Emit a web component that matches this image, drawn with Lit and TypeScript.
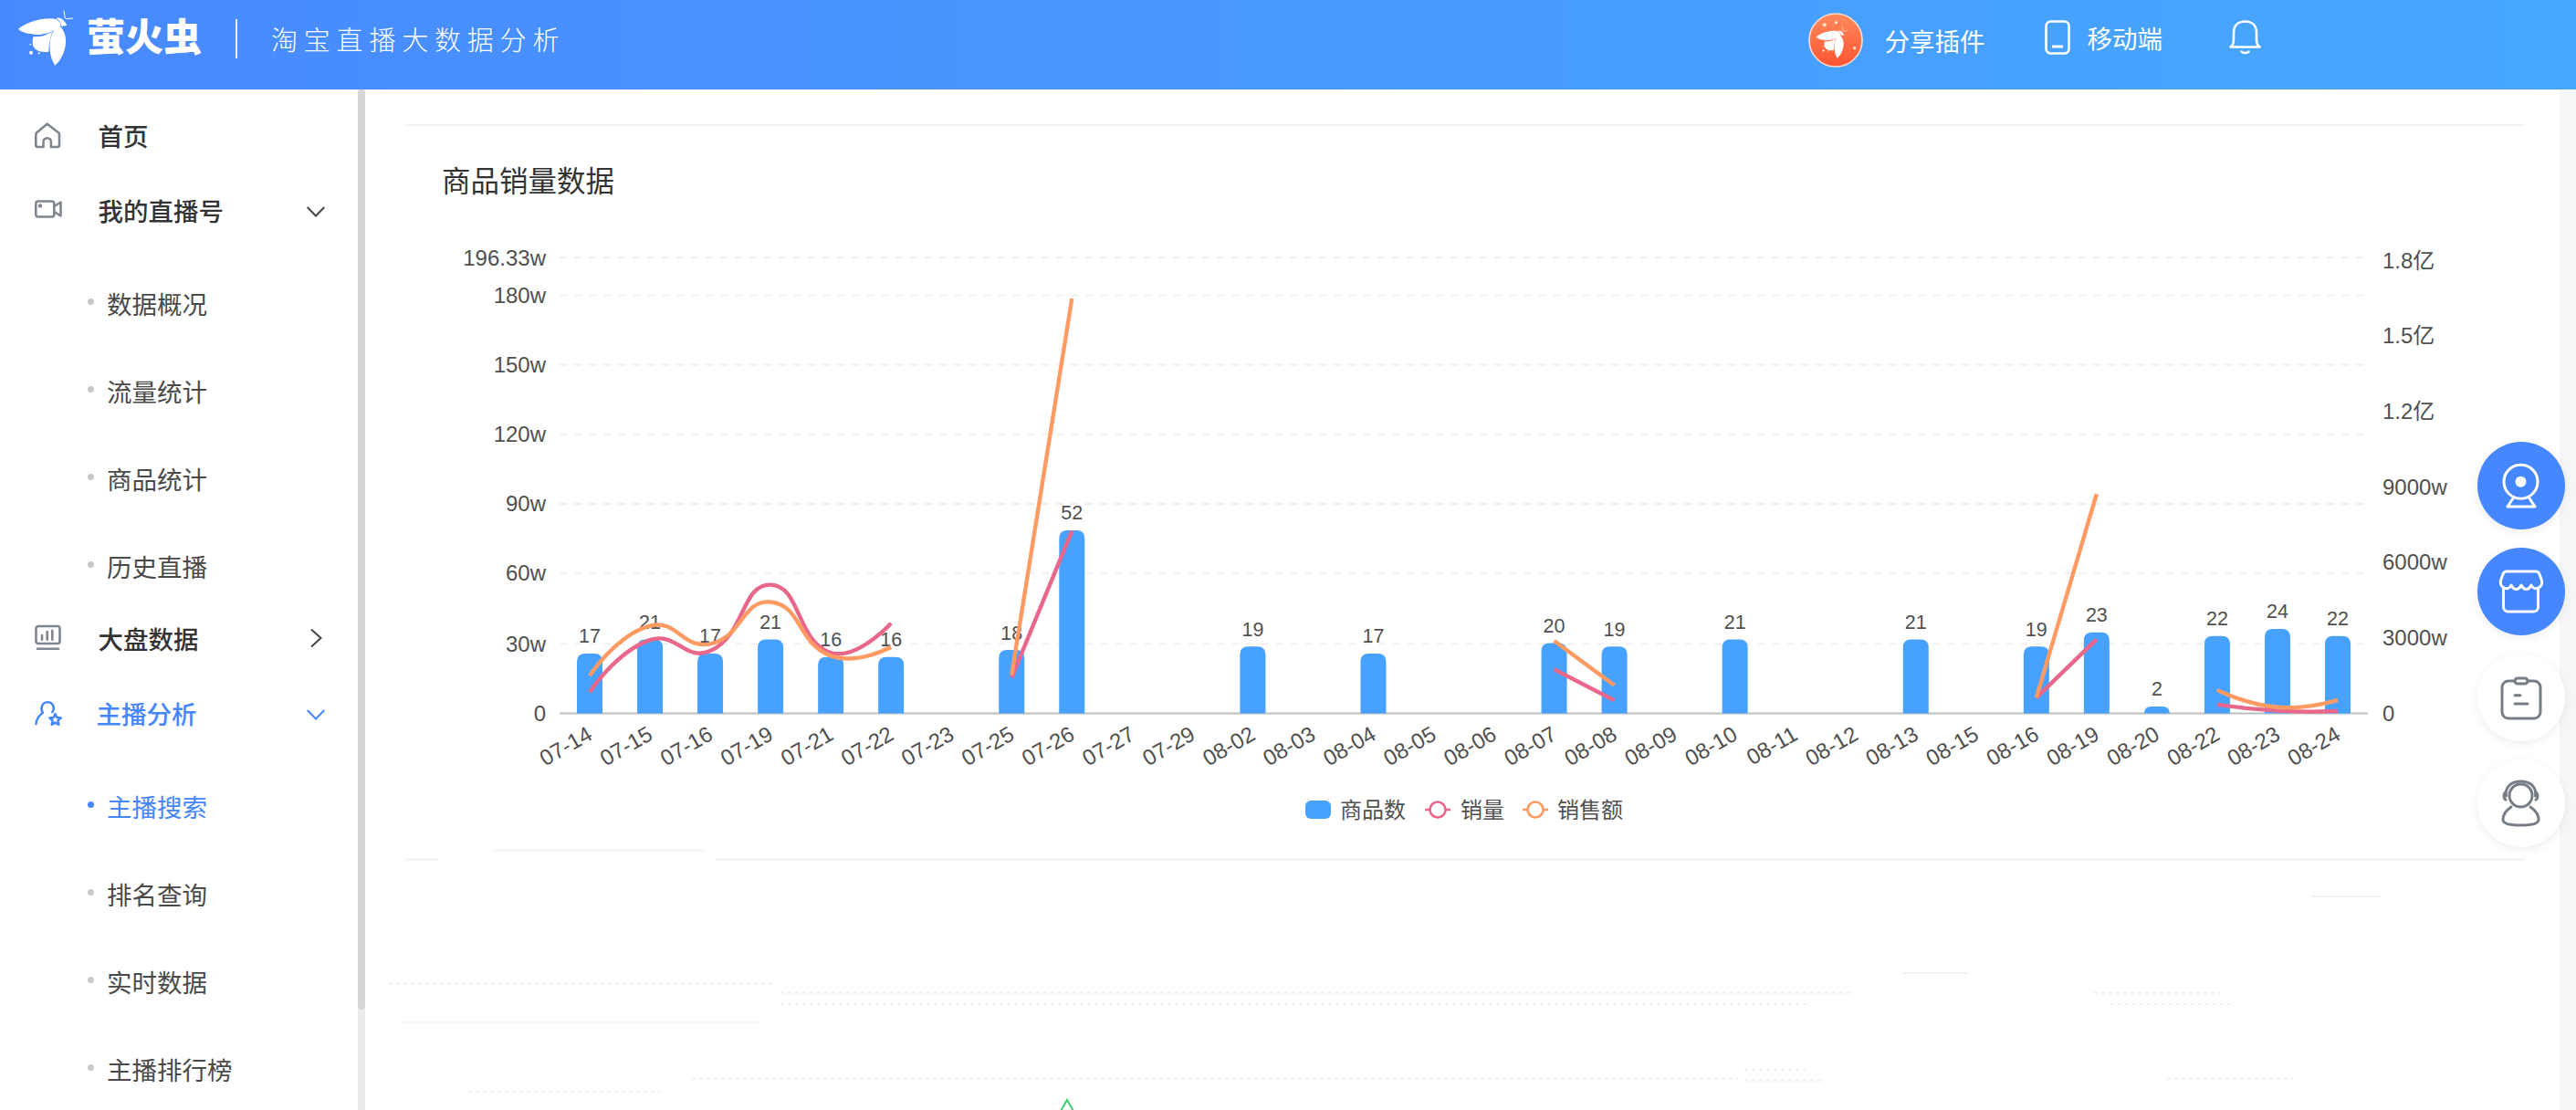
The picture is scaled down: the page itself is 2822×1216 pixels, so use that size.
import { LitElement, html, css, svg } from "lit";
import { customElement } from "lit/decorators.js";

const SANS = `"Liberation Sans", "Noto Sans CJK SC", sans-serif`;

type P = [number, number];

const DATES = ["07-14","07-15","07-16","07-19","07-21","07-22","07-23","07-25","07-26","07-27","07-29","08-02","08-03","08-04","08-05","08-06","08-07","08-08","08-09","08-10","08-11","08-12","08-13","08-15","08-16","08-19","08-20","08-22","08-23","08-24"];
const COUNTS: (number | null)[] = [17,21,17,21,16,16,null,18,52,null,null,19,null,17,null,null,20,19,null,21,null,null,21,null,19,23,2,22,24,22];

const X0 = 613, X1 = 2594, BASE = 781.6;
const STEP = (X1 - X0) / DATES.length;
const cx = (i: number) => X0 + STEP * (i + 0.5);

const GRID = [282, 323.6, 399.8, 475.8, 551.9, 627.7, 705.4];
const LEFT: [string, number][] = [["196.33w",282],["180w",323.6],["150w",399.8],["120w",475.8],["90w",551.9],["60w",627.7],["30w",705.4],["0",781.6]];
const RIGHT: [string, number][] = [["1.8亿",285],["1.5亿",367.8],["1.2亿",450.6],["9000w",533.2],["6000w",615.4],["3000w",698.2],["0",781.6]];

const seg = (start: number, ys: number[]): P[] => ys.map((y, k) => [cx(start + k), y]);
const PINK: P[][] = [
  seg(0, [758.4, 701.2, 713, 640.6, 715, 682.7]),
  seg(7, [742.4, 581.6]),
  seg(16, [733.3, 767.3]),
  seg(24, [764.3, 700.3]),
  seg(27, [771.9, 778.6, 779]),
];
const ORANGE: P[][] = [
  seg(0, [740.3, 685.6, 705.4, 659.5, 718.4, 708.8]),
  seg(7, [739.5, 327]),
  seg(16, [702, 750.7]),
  seg(24, [764.3, 541.2]),
  seg(27, [755.9, 774.8, 766.8]),
];

function smoothPath(pts: P[]): string {
  const s = 0.5;
  const ctrl = pts.map((p, i) => {
    const prev = pts[i - 1], next = pts[i + 1];
    if (!prev || !next) return { a: p, b: p };
    const d0 = Math.hypot(p[0] - prev[0], p[1] - prev[1]);
    const d1 = Math.hypot(next[0] - p[0], next[1] - p[1]);
    const vx = (next[0] - prev[0]) * s, vy = (next[1] - prev[1]) * s;
    const r = d0 / (d0 + d1);
    return {
      a: [p[0] - vx * r, p[1] - vy * r] as P,
      b: [p[0] + vx * (1 - r), p[1] + vy * (1 - r)] as P,
    };
  });
  let d = `M${pts[0][0]} ${pts[0][1]}`;
  for (let i = 1; i < pts.length; i++) {
    const c1 = ctrl[i - 1].b, c2 = ctrl[i].a, p = pts[i];
    d += ` C${c1[0]} ${c1[1]} ${c2[0]} ${c2[1]} ${p[0]} ${p[1]}`;
  }
  return d;
}

function barPath(x: number, top: number, w: number, r: number): string {
  const rr = Math.min(r, BASE - top);
  return `M${x} ${BASE} V${top + rr} Q${x} ${top} ${x + rr} ${top} H${x + w - rr} Q${x + w} ${top} ${x + w} ${top + rr} V${BASE} Z`;
}

const moth = svg`
  <path d="M30 80C60 55 120 40 155 48C165 55 170 62 170 68C150 90 100 105 75 97C55 95 40 90 30 80Z"/>
  <path d="M80 105C105 108 125 100 142 88C135 110 130 135 130 155C105 160 80 150 77 130C76 120 78 110 80 105Z"/>
  <path d="M150 78L168 72C180 85 190 105 185 135C180 165 165 190 150 200C138 180 130 150 135 120C138 100 145 88 150 78Z"/>
  <path d="M155 45C166 40 180 48 190 68L172 72C172 60 165 52 155 45Z"/>
  <path d="M180 20L184 46M186 47L210 45" stroke="#fff" stroke-width="3" fill="none"/>
  <circle cx="72" cy="158" r="6"/><circle cx="98" cy="160" r="3"/><circle cx="70" cy="131" r="2.5"/>
`;

const chevDown = html`<svg class="chev" viewBox="0 0 20 20"><path d="M0.7 7L10 16.5L19.3 7"/></svg>`;
const chevRight = html`<svg class="chev" viewBox="0 0 20 20"><path d="M5 0.5L15.5 10L5 19.5"/></svg>`;

const icons = {
  home: html`<svg class="ico" viewBox="0 0 30 30"><path d="M13.7 2.7L2 12.5Q1.3 13 1.3 14V26a2 2 0 0 0 2 2H9.5V22.5a4.2 4.2 0 0 1 8.4 0V28H25a2 2 0 0 0 2-2V14Q27 13 26.3 12.5Z"/></svg>`,
  cam: html`<svg class="ico" viewBox="0 0 30 30"><rect x="1.3" y="5.5" width="20" height="17" rx="2.5"/><path d="M21.5 11L28.5 6.5V21.5L21.5 17"/><circle cx="6" cy="10.5" r="1" /></svg>`,
  board: html`<svg class="ico" viewBox="0 0 30 30"><rect x="1.5" y="2" width="26" height="19" rx="2.5"/><path d="M3 26.7H26M8 12V16.7M13.7 8V16.7M19.3 6.7V16.7"/></svg>`,
  anchor: html`<svg class="ico" viewBox="0 0 32 30"><path d="M1.5 28C2.5 21 6 17 9.5 15C6.5 11 8 2.5 15 2.3C22 2.5 24 10 20.5 14.2"/><path d="M24 16L25.9 20.3L30.7 20.8L27.1 24L28.1 28.7L24 26.3L19.9 28.7L20.9 24L17.3 20.8L22.1 20.3Z"/></svg>`,
};

@customElement("app-sidebar")
class AppSidebar extends LitElement {
  static styles = css`
    :host { display: block; width: 392px; flex: none; background: #fff; padding-top: 11px; box-sizing: border-box; overflow: hidden; font-family: ${css([SANS] as any)}; }
    .row { height: 78px; margin-bottom: 4px; display: flex; align-items: center; padding: 0 36px 0 38px; font-size: 27.5px; font-weight: 500; color: #333; }
    .row.on { color: #4586ff; }
    .ico { width: 30px; height: 30px; flex: none; fill: none; stroke: #80868f; stroke-width: 2.6; stroke-linejoin: round; stroke-linecap: round; }
    .on .ico { stroke: #4586ff; }
    .label { margin-left: 39.5px; flex: 1; white-space: nowrap; }
    .on .label { margin-left: 37.5px; }
    .chev { width: 20px; height: 20px; fill: none; stroke: #444; stroke-width: 2; flex: none; }
    .on .chev { stroke: #4586ff; }
    .subs { display: flex; flex-direction: column; gap: 20px; margin: 25px 0 2px; }
    .sub { height: 76px; display: flex; align-items: center; padding-left: 96px; font-size: 27.5px; color: #4a4a4a; white-space: nowrap; }
    .sub i { width: 7px; height: 7px; border-radius: 50%; background: #c8c8c8; margin-right: 14px; flex: none; margin-top: -4px; }
    .sub.on { color: #4586ff; }
    .sub.on i { background: #4586ff; }
  `;
  render() {
    const sub = (t: string, on = false) => html`<div class="sub ${on ? "on" : ""}"><i></i>${t}</div>`;
    return html`
      <div class="row">${icons.home}<span class="label">首页</span></div>
      <div class="row">${icons.cam}<span class="label">我的直播号</span>${chevDown}</div>
      <div class="subs">${sub("数据概况")}${sub("流量统计")}${sub("商品统计")}${sub("历史直播")}</div>
      <div class="row">${icons.board}<span class="label">大盘数据</span>${chevRight}</div>
      <div class="row on">${icons.anchor}<span class="label">主播分析</span>${chevDown}</div>
      <div class="subs">${sub("主播搜索", true)}${sub("排名查询")}${sub("实时数据")}${sub("主播排行榜")}</div>
    `;
  }
}

@customElement("sales-chart")
class SalesChart extends LitElement {
  static styles = css`
    :host { display: block; }
    svg { display: block; width: 2321px; height: 660px; font-family: ${css([SANS] as any)}; }
    .grid { stroke: #efefef; stroke-width: 2; stroke-dasharray: 8 8; }
    .axis { stroke: #bdbdbd; stroke-width: 2; }
    .tick { font-size: 24px; fill: #505050; }
    .cat { font-size: 24px; fill: #505050; }
    .val { font-size: 21.5px; fill: #505050; }
    .legend { font-size: 24px; fill: #505050; }
    .bar { fill: #47a2ff; }
    .line { fill: none; stroke-width: 4.4; }
    .pink { stroke: #e8678a; }
    .orange { stroke: #ff9a62; }
    .mark { fill: #fff; stroke-width: 2.6; }
    .thin { stroke-width: 2.6; }
  `;
  render() {
    return html`<svg viewBox="444 260 2321 660">
      ${GRID.map((y) => svg`<line class="grid" x1=${X0} x2=${X1} y1=${y} y2=${y}></line>`)}
      <line class="axis" x1=${X0} x2=${X1} y1=${BASE} y2=${BASE}></line>
      ${LEFT.map(([t, y]) => svg`<text class="tick" x="598" y=${y + 8.5} text-anchor="end">${t}</text>`)}
      ${RIGHT.map(([t, y]) => svg`<text class="tick" x="2610" y=${y + 8.5}>${t}</text>`)}
      ${COUNTS.map((v, i) => {
        if (v === null) return null;
        const top = BASE - v * 3.86;
        return svg`<path class="bar" d=${barPath(cx(i) - 14, top, 28, 9)}></path>
          <text class="val" x=${cx(i)} y=${top - 11.5} text-anchor="middle">${v}</text>`;
      })}
      ${PINK.map((p) => svg`<path class="line pink" d=${smoothPath(p)}></path>`)}
      ${ORANGE.map((p) => svg`<path class="line orange" d=${smoothPath(p)}></path>`)}
      ${DATES.map((d, i) => svg`<text class="cat" text-anchor="end" transform="translate(${cx(i) + 4.5} 809) rotate(-30)">${d}</text>`)}
      <rect class="bar" x="1430" y="877" width="28" height="20" rx="6"></rect>
      <text class="legend" x="1468" y="895.5">商品数</text>
      <line class="line pink thin" x1="1561" x2="1589" y1="887" y2="887"></line>
      <circle class="mark pink" cx="1575" cy="887" r="8.5"></circle>
      <text class="legend" x="1600" y="895.5">销量</text>
      <line class="line orange thin" x1="1668" x2="1696" y1="887" y2="887"></line>
      <circle class="mark orange" cx="1682" cy="887" r="8.5"></circle>
      <text class="legend" x="1706" y="895.5">销售额</text>
    </svg>`;
  }
}

@customElement("ghost-chart")
class GhostChart extends LitElement {
  static styles = css`
    :host { display: block; margin-left: -44px; }
    svg { display: block; width: 2404px; height: 296px; }
    .rule { stroke: #f2f2f2; stroke-width: 2; }
    .dots { stroke: #f0f0f0; stroke-width: 2; stroke-dasharray: 4 4; }
    .peak { stroke: #3ecb6c; stroke-width: 2; fill: none; }
  `;
  render() {
    const rules = [[444, 480, 941.5], [783, 2766, 941.5], [540, 772, 931.5], [2532, 2608, 982], [2084, 2156, 1066]];
    const dots = [
      [426, 847, 1077.7], [855, 2031, 1087.7], [855, 1980, 1100], [2294, 2432, 1087.7], [2312, 2447, 1100],
      [441, 835, 1120], [758, 1904, 1181.7], [1911, 1983, 1171.7], [1911, 1999, 1183.7], [2374, 2512, 1181.7], [513, 723, 1195.7],
    ];
    return html`<svg viewBox="400 920 2404 296">
      ${rules.map(([a, b, y]) => svg`<line class="rule" x1=${a} x2=${b} y1=${y} y2=${y}></line>`)}
      ${dots.map(([a, b, y]) => svg`<line class="dots" x1=${a} x2=${b} y1=${y} y2=${y}></line>`)}
      <path class="peak" d="M1162 1217L1169 1205L1176 1217"></path>
    </svg>`;
  }
}

@customElement("app-root")
export class AppRoot extends LitElement {
  static styles = css`
    :host { display: block; width: 2822px; height: 1216px; overflow: hidden; position: relative; background: #f5f6f8; font-family: ${css([SANS] as any)}; }
    header { height: 98px; box-sizing: border-box; padding: 0 345px 14px 10px; display: flex; align-items: center; color: #fff; background: linear-gradient(90deg, #4889ff, #47a8ff); white-space: nowrap; }
    .logo { width: 86px; height: 75px; fill: #fff; flex: none; }
    .brand { font-size: 42px; font-weight: 900; letter-spacing: 0; line-height: 1; margin-left: -1px; }
    .sep { width: 2px; height: 43px; background: rgba(255,255,255,.85); margin-left: 37px; }
    .tag { margin-left: 37px; font-size: 29px; font-weight: 300; letter-spacing: 6.8px; }
    .right { margin-left: auto; display: flex; align-items: center; padding-top: 4px; font-size: 27.5px; }
    .avatar { width: 60px; height: 60px; flex: none; margin-right: 23.5px; }
    .phone { width: 28px; height: 38px; flex: none; margin: 0 19px 6px 65px; fill: none; stroke: #fff; stroke-width: 2.6; }
    .m-text { margin-bottom: 6px; }
    .bell { width: 35px; height: 38px; flex: none; margin: 0 0 7px 73px; fill: none; stroke: #fff; stroke-width: 2.6; stroke-linejoin: round; stroke-linecap: round; }
    .body { display: flex; height: 1118px; }
    .bar-track { width: 8px; flex: none; background: #ebebeb; box-shadow: 2px 0 4px rgba(0,0,0,.03); }
    .bar-thumb { height: 1008px; background: #d6d6d6; border-radius: 4px; }
    main { width: 2404px; flex: none; box-sizing: border-box; background: #fff; padding: 38px 0 0 44px; overflow: hidden; }
    .rule { width: 2321px; height: 2px; background: #f2f2f2; }
    h2 { margin: 39px 0 39px 40px; font-size: 31.5px; line-height: 44px; font-weight: 400; color: #333; }
    .floats { position: absolute; top: 484px; right: 12px; display: flex; flex-direction: column; gap: 20px; }
    .fab { width: 96px; height: 96px; border-radius: 50%; background: #fff; box-shadow: 0 3px 10px rgba(0,0,0,.07); }
    .fab.blue { background: #4686ff; }
    .fab svg { display: block; width: 96px; height: 96px; fill: none; stroke: #767d87; stroke-width: 3; stroke-linecap: round; stroke-linejoin: round; }
    .fab.blue svg { stroke: #fff; }
    .fab .dot { fill: #fff; stroke: none; }
  `;
  render() {
    return html`
      <header>
        <svg class="logo" viewBox="0 0 258 225">${moth}</svg>
        <span class="brand">萤火虫</span>
        <span class="sep"></span>
        <span class="tag">淘宝直播大数据分析</span>
        <div class="right">
          <svg class="avatar" viewBox="30 25 180 180">
            <defs><linearGradient id="av" x1="0" y1="0" x2="0" y2="1"><stop offset="0" stop-color="#ff8a5c"></stop><stop offset="1" stop-color="#ff5433"></stop></linearGradient></defs>
            <circle cx="120" cy="115" r="87" fill="url(#av)" stroke="#ffd9c9" stroke-width="5"></circle>
            <g fill="#fff" transform="translate(38 58) scale(.58)">${moth}</g>
            <g fill="#ffe3d6"><circle cx="83" cy="65" r="6"></circle><circle cx="121" cy="57" r="5"></circle><circle cx="182" cy="141" r="5"></circle></g>
          </svg>
          <span>分享插件</span>
          <svg class="phone" viewBox="0 0 28 38"><rect x="1.5" y="1.5" width="25" height="35" rx="5"></rect><path d="M8 29H20" stroke-width="3"></path></svg>
          <span class="m-text">移动端</span>
          <svg class="bell" viewBox="0 0 35 38"><path d="M1.5 29.5C4.5 28 5 25 5 21V14C5 6 10 1.5 17.5 1.5S30 6 30 14V21C30 25 30.500 28 33.500 29.500Z"></path><path d="M13.500 34.500C15 36.500 20 36.500 21.500 34.500"></path></svg>
        </div>
      </header>
      <div class="body">
        <app-sidebar></app-sidebar>
        <div class="bar-track"><div class="bar-thumb"></div></div>
        <main>
          <div class="rule"></div>
          <h2>商品销量数据</h2>
          <sales-chart></sales-chart>
          <ghost-chart></ghost-chart>
        </main>
      </div>
      <div class="floats">
        <div class="fab blue"><svg viewBox="0 0 96 96"><circle cx="47.500" cy="43.700" r="18.500"></circle><circle class="dot" cx="47.500" cy="43.700" r="6"></circle><path d="M39 62L33 71H63L57 62"></path></svg></div>
        <div class="fab blue"><svg viewBox="0 0 96 96"><path d="M32 26H64Q67 26 68 29L70.500 36C72.500 44 62 48 59 41C56 47 51 47 48 41C45 47 40 47 37 41C34 48 23.500 44 25.500 36L28 29Q29 26 32 26Z"></path><path d="M28.500 45V65a5 5 0 0 0 5 5H61.500a5 5 0 0 0 5-5V45"></path></svg></div>
        <div class="fab"><svg viewBox="0 0 96 96"><path d="M40.500 30H34a7 7 0 0 0-7 7V64a7 7 0 0 0 7 7H62a7 7 0 0 0 7-7V37a7 7 0 0 0-7-7H55"></path><rect x="41" y="27" width="14" height="6" rx="3"></rect><path d="M41 45.700H47M41 55H55"></path></svg></div>
        <div class="fab"><svg viewBox="0 0 96 96"><circle cx="47.500" cy="39.500" r="12.500"></circle><path d="M31.500 40C30 30 37 24 47.500 24S65 30 63.500 40"></path><path d="M31 36C28.500 37 28.500 43 31 44M64 36C66.500 37 66.500 43 64 44"></path><path d="M37 52C31 56 28 61 28 66C28 70 35 72 47.500 72C60 72 67 70 67 66C67 61 64 56 58 52"></path></svg></div>
      </div>
    `;
  }
}
void AppSidebar; void SalesChart; void GhostChart;
